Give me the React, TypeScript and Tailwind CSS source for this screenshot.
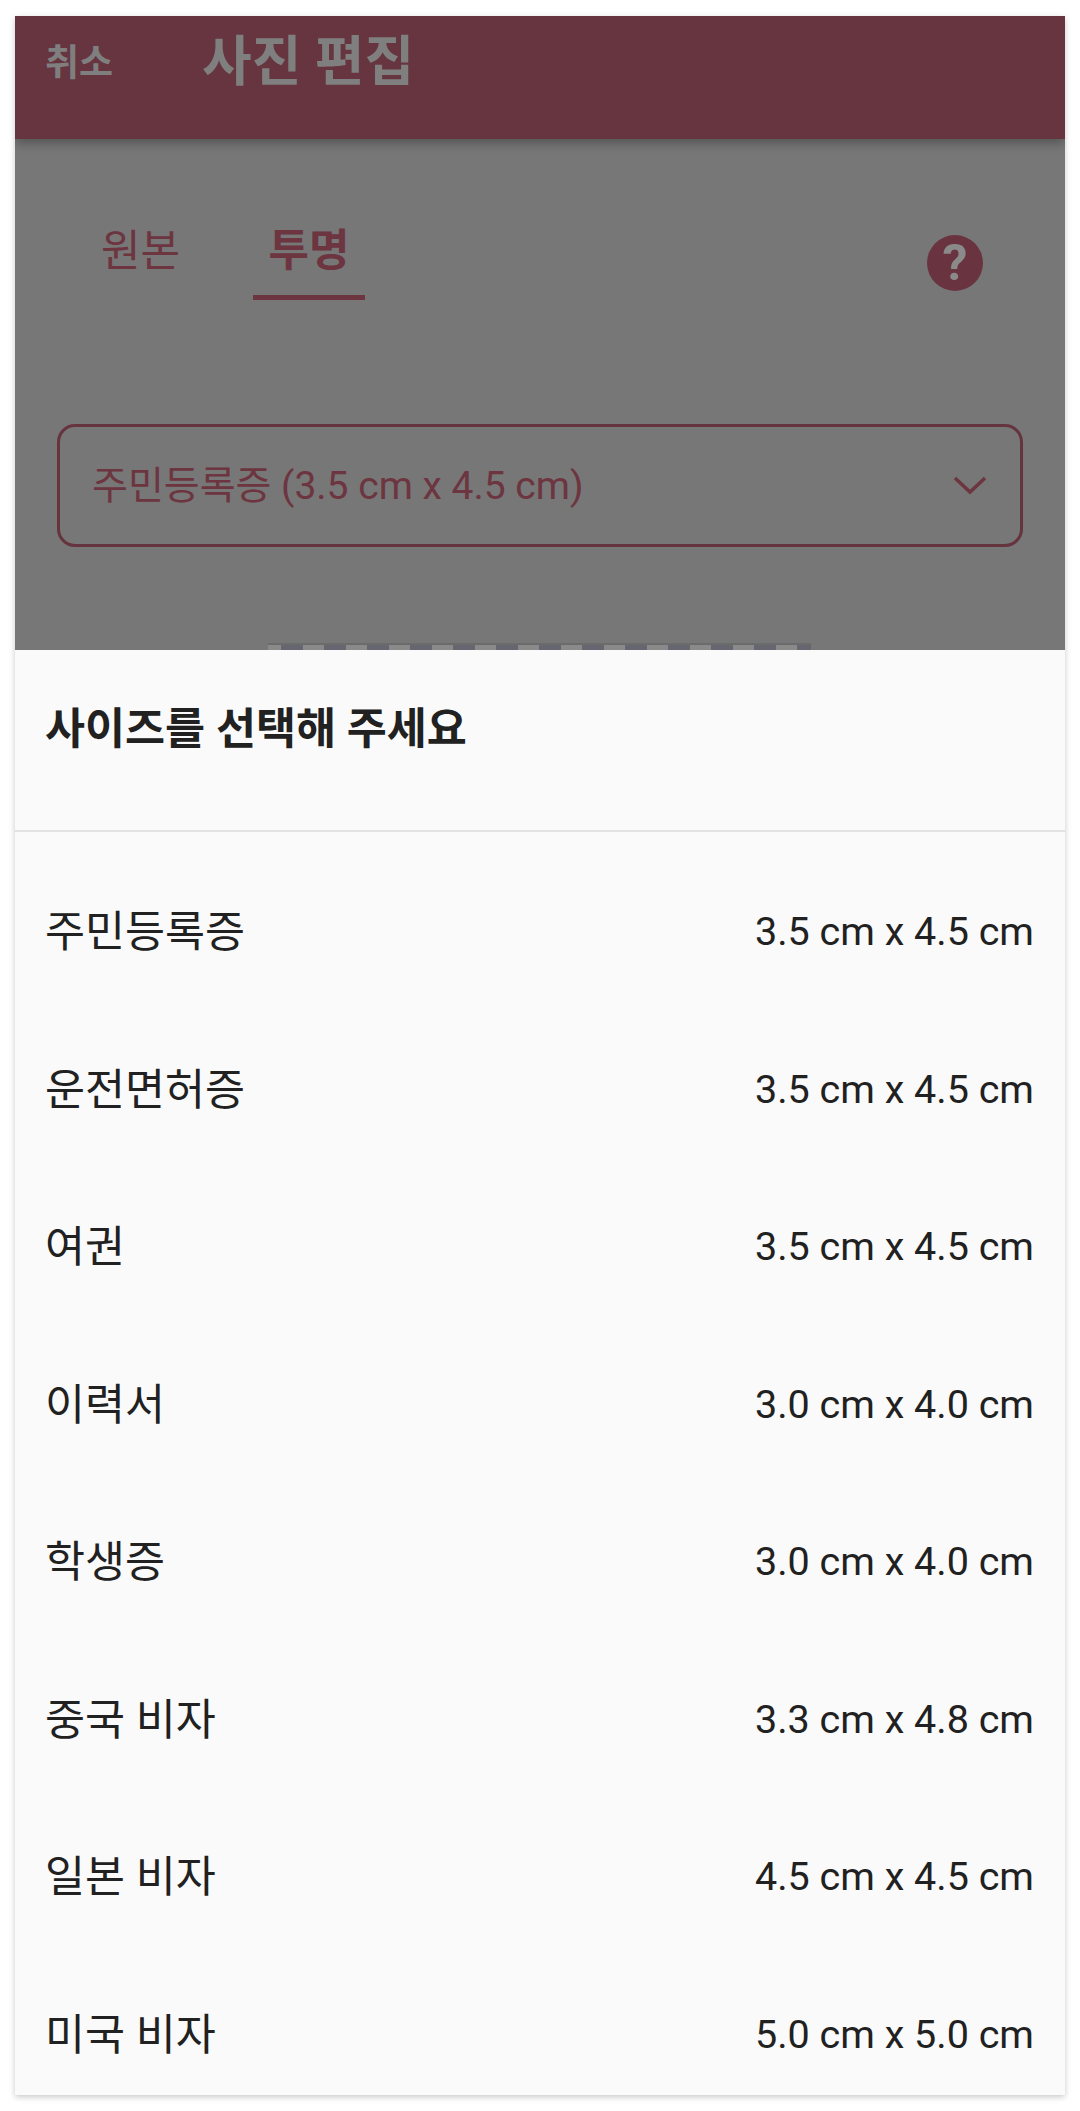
export default function App() {
  const rows = [
    ["주민등록증", "3.5 cm x 4.5 cm"],
    ["운전면허증", "3.5 cm x 4.5 cm"],
    ["여권", "3.5 cm x 4.5 cm"],
    ["이력서", "3.0 cm x 4.0 cm"],
    ["학생증", "3.0 cm x 4.0 cm"],
    ["중국 비자", "3.3 cm x 4.8 cm"],
    ["일본 비자", "4.5 cm x 4.5 cm"],
    ["미국 비자", "5.0 cm x 5.0 cm"],
  ];
  return (
    <div className="w-[1080px] h-[2111px] bg-white px-[15px] pt-[16px] font-['Roboto','Noto_Sans_CJK_KR',sans-serif] overflow-hidden">
      <div className="w-[1050px] h-[2079px] flex flex-col overflow-hidden shadow-[0_2px_6px_rgba(0,0,0,0.22)]">
        <div className="h-[634px] shrink-0 bg-[#777777] flex flex-col">
          <header className="h-[123px] shrink-0 bg-[#67353f] flex items-start pl-[30px] shadow-[0_4px_10px_rgba(0,0,0,0.3)]">
            <span className="mt-[22px] w-[157px] text-[37px] leading-[52px] font-bold text-[#7f7f7f]">취소</span>
            <span className="mt-[10px] text-[54px] leading-[74px] font-bold text-[#7f7f7f]">사진 편집</span>
          </header>
          <div className="h-[285px] shrink-0 px-[40px] pt-[84px]">
            <div className="flex items-start">
              <div className="w-[198px] pl-[46px] h-[77px] text-[43px] leading-[56px] text-[#6c3540]">원본</div>
              <div className="w-[112px] h-[77px] flex flex-col items-center border-b-[5px] border-[#6c3540] text-[44px] leading-[56px] font-bold text-[#6c3540]">투명</div>
              <div className="flex-1 flex justify-end pr-[42px]">
                <div className="w-[56px] h-[56px] mt-[12px] rounded-full bg-[#693440] flex items-center justify-center text-[50px] font-bold text-[#8a8a8a] leading-none">?</div>
              </div>
            </div>
          </div>
          <div className="mx-[42px] h-[123px] shrink-0 rounded-[18px] border-[3px] border-[#66343f] flex items-center justify-between pl-[32px] pr-[33px]">
            <span className="text-[39px] text-[#6c3540] leading-none mt-[2px]">주민등록증 (3.5 cm x 4.5 cm)</span>
            <svg width="34" height="20" viewBox="0 0 34 20" fill="none" className="mt-[-2px]">
              <path d="M2 3 L17 17 L32 3" stroke="#6c3540" strokeWidth="3.5" />
            </svg>
          </div>
          <div className="flex-1" />
        </div>
        <div className="relative h-0 shrink-0">
          <div className="absolute left-[253px] w-[543px] top-[-7px] h-[7px] bg-[repeating-linear-gradient(90deg,#8a8a8a_0px,#8a8a8a_13px,#666670_13px,#666670_35px,#8a8a8a_35px,#8a8a8a_43px)] border-t-[2px] border-[#6b6b6b]" />
        </div>
        <div className="flex-1 bg-[#fafafa] min-h-0 overflow-hidden">
          <div className="h-[182px] px-[30px] pt-[51px] border-b-[2px] border-[#e2e2e2]">
            <div className="text-[43.5px] leading-[58px] font-bold text-[#212121]">사이즈를 선택해 주세요</div>
          </div>
          <div className="pt-[21px] text-[#212121]">
            {rows.map(([a, b]) => (
              <div key={a} className="h-[157.5px] flex items-center justify-between pl-[30px] pr-[31px]">
                <span className="text-[43.5px] leading-none mt-[2px]">{a}</span>
                <span className="text-[39.5px] leading-none">{b}</span>
              </div>
            ))}
          </div>
        </div>
      </div>
    </div>
  );
}
